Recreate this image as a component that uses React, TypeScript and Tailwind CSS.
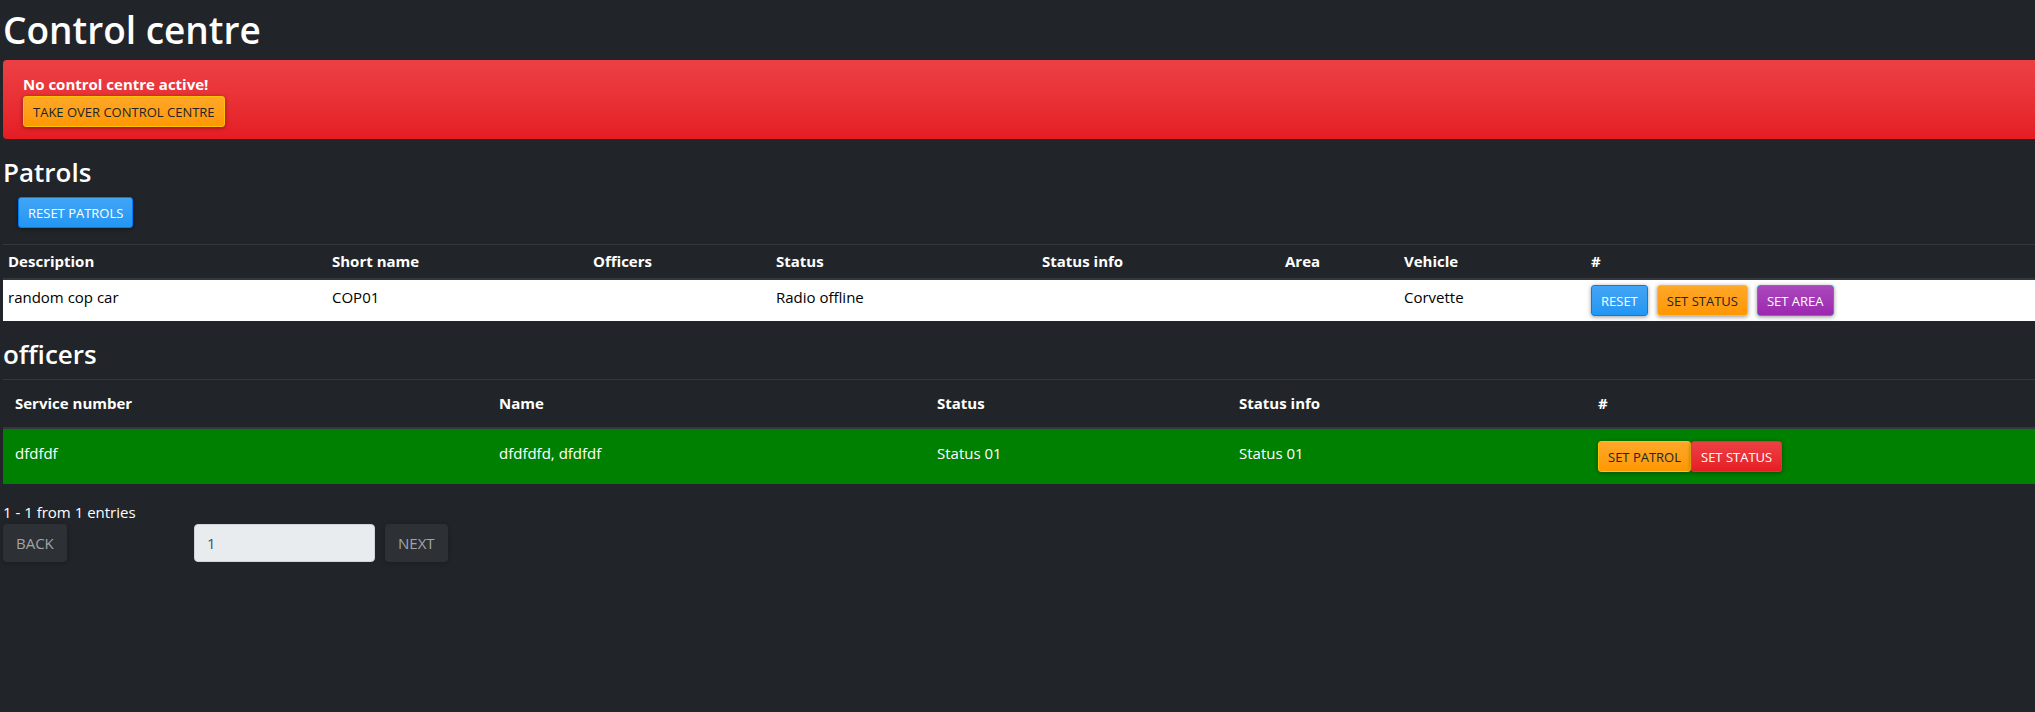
import { ButtonHTMLAttributes, ReactNode } from "react";
import clsx from "clsx";

type Tone = "primary" | "warning" | "info" | "danger";

const tones: Record<Tone, string> = {
  primary: "border-[#007bff] from-[#42a5f5] to-[#2196f3] text-white",
  warning: "border-[#ffc107] from-[#ffa726] to-[#ff9800] text-[#212529]",
  info: "border-[#17a2b8] from-[#ab47bc] to-[#9c27b0] text-white",
  danger: "border-[#dc3545] from-[#ec4045] to-[#e51c23] text-white",
};

function ActionButton({
  tone,
  className,
  ...rest
}: { tone: Tone } & ButtonHTMLAttributes<HTMLButtonElement>) {
  return (
    <button
      type="button"
      className={clsx(
        "h-[31px] shrink-0 rounded-[3px] border bg-linear-to-b px-[9px] text-[13px] leading-5 whitespace-nowrap uppercase shadow-[0_1px_4px_rgba(0,0,0,0.4)]",
        tones[tone],
        className,
      )}
      {...rest}
    />
  );
}

function PageButton({ children }: { children: ReactNode }) {
  return (
    <button
      type="button"
      disabled
      className="h-[38px] rounded-sm bg-[#2d3135] px-[13px] text-[15px] text-[#a2a4a6] uppercase shadow-[0_1px_4px_rgba(0,0,0,0.25)]"
    >
      {children}
    </button>
  );
}

interface Column {
  label: string;
  weight: number;
}

const patrolColumns: Column[] = [
  { label: "Description", weight: 324 },
  { label: "Short name", weight: 261 },
  { label: "Officers", weight: 183 },
  { label: "Status", weight: 266 },
  { label: "Status info", weight: 243 },
  { label: "Area", weight: 119 },
  { label: "Vehicle", weight: 187 },
  { label: "#", weight: 449 },
];

const officerColumns: Column[] = [
  { label: "Service number", weight: 484 },
  { label: "Name", weight: 438 },
  { label: "Status", weight: 302 },
  { label: "Status info", weight: 359 },
  { label: "#", weight: 449 },
];

function DataTable({
  name,
  columns,
  cells,
  rowClass,
  cellClass,
}: {
  name: string;
  columns: Column[];
  cells: ReactNode[];
  rowClass: string;
  cellClass: string;
}) {
  const total = columns.reduce((sum, c) => sum + c.weight, 0);
  return (
    <table aria-label={name} className="w-full table-fixed border-separate border-spacing-0 text-left">
      <colgroup>
        {columns.map((c) => (
          <col key={c.label} style={{ width: `${(c.weight / total) * 100}%` }} />
        ))}
      </colgroup>
      <thead>
        <tr>
          {columns.map((c) => (
            <th
              key={c.label}
              scope="col"
              className={clsx("border-t border-b-2 border-t-[#32383e] border-b-[#32383e] leading-[23px] font-bold", cellClass)}
            >
              {c.label}
            </th>
          ))}
        </tr>
      </thead>
      <tbody>
        <tr className={rowClass}>
          {cells.map((cell, i) => (
            <td key={columns[i].label} className={clsx("align-top", cellClass)}>
              {cell}
            </td>
          ))}
        </tr>
      </tbody>
    </table>
  );
}

export default function App() {
  return (
    <main className="min-h-screen bg-[#212529] pt-[6px] pl-[3px] font-['Open_Sans','Noto_Sans',sans-serif] text-[15px] leading-6 text-white">
      <h1 className="mb-[6px] text-[37px] leading-[48px] font-semibold">Control centre</h1>

      <section
        role="alert"
        className="mb-4 rounded-l-sm bg-linear-to-b from-[#ec4045] to-[#e51c23] px-5 pt-3 pb-3"
      >
        <strong className="block font-bold">No control centre active!</strong>
        <ActionButton tone="warning">Take over control centre</ActionButton>
      </section>

      <section className="mb-4">
        <h2 className="mb-2 text-[26px] leading-[34px] font-semibold">Patrols</h2>
        <div className="mb-4 flex pl-[15px]">
          <ActionButton tone="primary">Reset patrols</ActionButton>
        </div>
        <DataTable
          name="Patrols"
          columns={patrolColumns}
          rowClass="bg-white text-black"
          cellClass="p-[5px]"
          cells={[
            "random cop car",
            "COP01",
            "",
            "Radio offline",
            "",
            "",
            "Corvette",
            <div className="flex gap-[9px]">
              <ActionButton tone="primary">Reset</ActionButton>
              <ActionButton tone="warning">Set status</ActionButton>
              <ActionButton tone="info">Set area</ActionButton>
            </div>,
          ]}
        />
      </section>

      <section className="mb-4">
        <h2 className="mb-2 text-[26px] leading-[34px] font-semibold">officers</h2>
        <DataTable
          name="Officers"
          columns={officerColumns}
          rowClass="bg-[#008000]"
          cellClass="p-3"
          cells={[
            "dfdfdf",
            "dfdfdfd, dfdfdf",
            "Status 01",
            "Status 01",
            <div className="flex">
              <ActionButton tone="warning">Set patrol</ActionButton>
              <ActionButton tone="danger">Set status</ActionButton>
            </div>,
          ]}
        />
      </section>

      <p>1 - 1 from 1 entries</p>
      <nav aria-label="Pagination" className="flex gap-[10px]">
        <div className="w-[181px]">
          <PageButton>Back</PageButton>
        </div>
        <input
          aria-label="Page"
          type="text"
          disabled
          value="1"
          readOnly
          className="h-[38px] w-[181px] rounded-sm border border-[#ced4da] bg-[#e9ecef] px-3 text-[15px] text-[#495057]"
        />
        <PageButton>Next</PageButton>
      </nav>
    </main>
  );
}
